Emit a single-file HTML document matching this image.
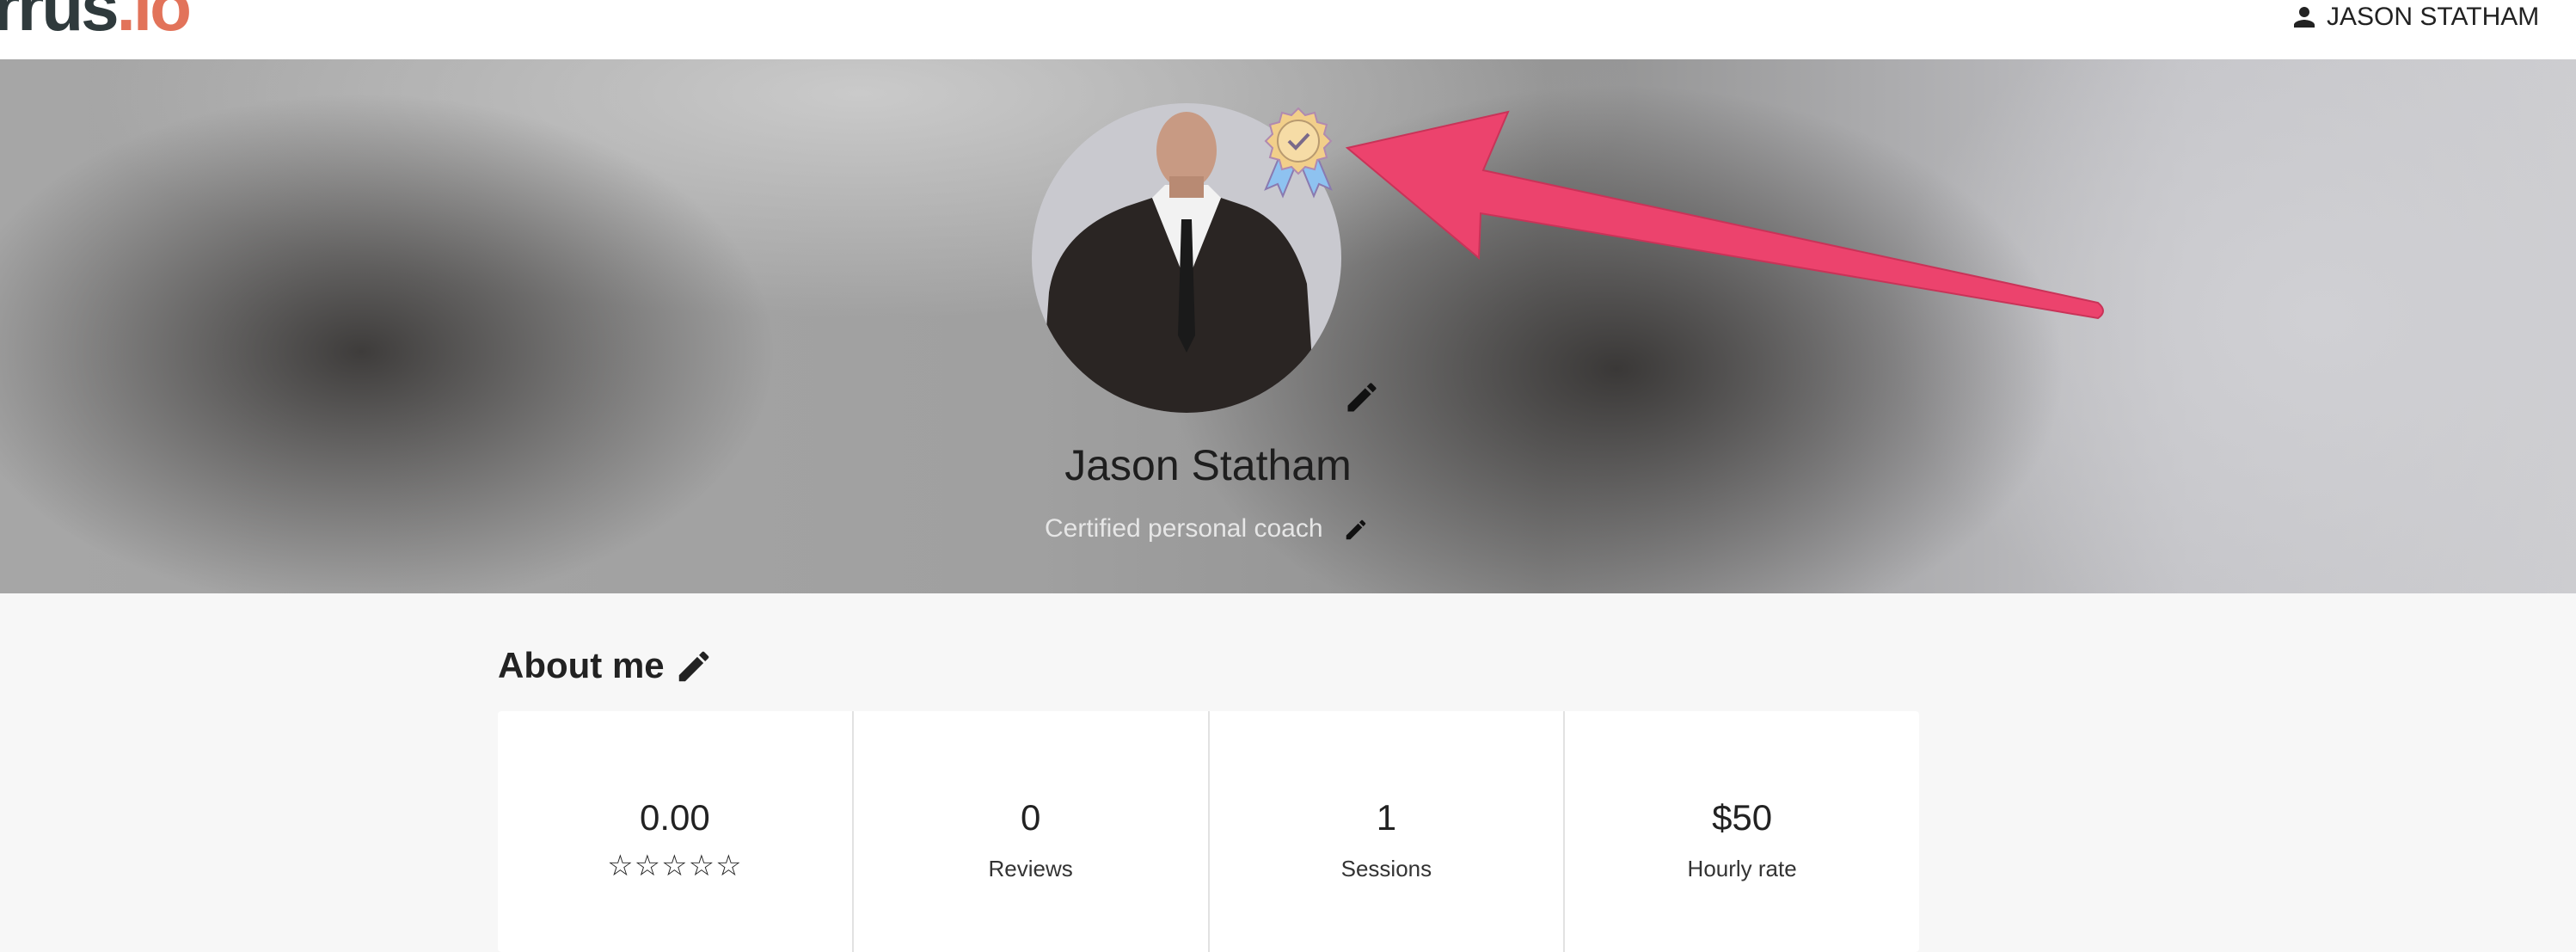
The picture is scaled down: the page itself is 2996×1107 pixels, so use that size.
<!DOCTYPE html>
<html><head><style>
*{margin:0;padding:0;box-sizing:border-box}
body{width:2996px;height:1086px;overflow:hidden;background:#f7f7f7;font-family:"Liberation Sans",sans-serif;position:relative}
.hdr{position:absolute;left:0;top:0;width:2996px;height:69px;background:#fff}
.logo{position:absolute;left:-8px;top:-38px;font-size:80px;font-weight:bold;letter-spacing:-3px;color:#2f3a3c}
.logo span{color:#e2735a}
.user{position:absolute;left:2662px;top:3px;height:34px;display:flex;align-items:center;font-size:30px;color:#222}
.banner{position:absolute;left:0;top:69px;width:2996px;height:621px;background:
radial-gradient(ellipse 480px 300px at 420px 340px,#3e3c3b,rgba(60,58,57,0) 100%),
radial-gradient(ellipse 520px 330px at 1880px 360px,#3a3837,rgba(58,56,55,0) 100%),
radial-gradient(ellipse 900px 260px at 1000px 40px,#cacaca,rgba(200,200,200,0) 100%),
radial-gradient(ellipse 500px 400px at 2700px 300px,#d0d0d4,rgba(208,208,212,0) 100%),
linear-gradient(90deg,#a6a6a6,#a0a0a0 40%,#909090 60%,#c4c4c8 85%,#cdcdd0)}
.av{position:absolute;left:1200px;top:120px;width:360px;height:360px;border-radius:50%;background:#c9c9cf;overflow:hidden}
.name{position:absolute;left:1205px;top:512px;width:400px;text-align:center;font-size:50px;color:#1e1e1e}
.sub{position:absolute;left:1215px;top:598px;font-size:30px;color:#e6e6e6}
.about{position:absolute;left:579px;top:750px;font-size:42px;font-weight:bold;color:#222}
.cards{position:absolute;left:579px;top:827px;width:1653px;height:280px;background:#fff;border-radius:4px;display:flex}
.c{flex:1;border-right:2px solid #e2e2e2;text-align:center;padding-top:100px}
.c:last-child{border-right:none}
.v{font-size:42px;color:#222}
.l{font-size:26px;color:#333;margin-top:20px}
.st{font-size:34px;color:#222;margin-top:12px;letter-spacing:1px}
</style></head><body>
<div class="hdr"><div class="logo">rrus<span>.io</span></div>
<div class="user"><svg width="36" height="36" viewBox="0 0 24 24"><path fill="#222" d="M12 12c2.2 0 4-1.8 4-4s-1.8-4-4-4-4 1.8-4 4 1.8 4 4 4zm0 2c-2.7 0-8 1.3-8 4v2h16v-2c0-2.7-5.3-4-8-4z"/></svg><span style="margin-left:8px">JASON STATHAM</span></div></div>
<div class="banner"></div>
<div class="av"><svg width="360" height="360" viewBox="0 0 360 360">
<path fill="#2a2523" d="M20 220 Q30 150 110 120 L140 110 L180 200 L220 110 L250 120 Q300 140 320 210 L330 360 L10 360Z"/>
<path fill="#f2f2f2" d="M140 110 L180 210 L220 110 L205 95 L155 95Z"/>
<path fill="#1a1a1a" d="M174 135 L186 135 L190 270 L180 290 L170 270Z"/>
<ellipse cx="180" cy="55" rx="35" ry="45" fill="#c89a83"/>
<rect x="160" y="85" width="40" height="25" fill="#b88a73"/>
</svg></div>
<svg style="position:absolute;left:1460px;top:122px" width="100" height="110" viewBox="0 0 100 110">
<path d="M28 60 L12 98 L26 92 L32 106 L46 72Z M72 60 L88 98 L74 92 L68 106 L54 72Z" fill="#8ec2f0" stroke="#8a7ab0" stroke-width="2"/>
<polygon points="50,4 58,12 69,9 72,20 83,23 80,34 88,42 80,50 83,61 72,64 69,75 58,72 50,80 42,72 31,75 28,64 17,61 20,50 12,42 20,34 17,23 28,20 31,9 42,12" fill="#f2cf8a" stroke="#b08ab0" stroke-width="2"/>
<circle cx="50" cy="42" r="24" fill="#f6dca6" stroke="#b89a70" stroke-width="2"/>
<path d="M39 42 L47 50 L62 34" fill="none" stroke="#7a6a8a" stroke-width="4"/>
</svg>
<svg style="position:absolute;left:0;top:0" width="2996" height="700">
<path d="M1567 172 L1754 130 L1725 198 L2440 352 Q2452 362 2440 370 L1722 248 L1720 300 Z" fill="#ec436d" stroke="#c93358" stroke-width="2"/>
</svg>
<svg style="position:absolute;left:1562px;top:440px" width="44" height="44" viewBox="0 0 24 24"><path fill="#111" d="M3 17.25V21h3.75L17.81 9.94l-3.75-3.75L3 17.25zM20.71 7.04a1 1 0 000-1.41l-2.34-2.34a1 1 0 00-1.41 0l-1.83 1.83 3.75 3.75 1.83-1.83z"/></svg>
<div class="name">Jason Statham</div>
<div class="sub">Certified personal coach</div>
<svg style="position:absolute;left:1562px;top:601px" width="30" height="30" viewBox="0 0 24 24"><path fill="#111" d="M3 17.25V21h3.75L17.81 9.94l-3.75-3.75L3 17.25zM20.71 7.04a1 1 0 000-1.41l-2.34-2.34a1 1 0 00-1.41 0l-1.83 1.83 3.75 3.75 1.83-1.83z"/></svg>
<div class="about">About me</div>
<svg style="position:absolute;left:784px;top:752px" width="46" height="46" viewBox="0 0 24 24"><path fill="#222" d="M3 17.25V21h3.75L17.81 9.94l-3.75-3.75L3 17.25zM20.71 7.04a1 1 0 000-1.41l-2.34-2.34a1 1 0 00-1.41 0l-1.83 1.83 3.75 3.75 1.83-1.83z"/></svg>
<div class="cards">
<div class="c"><div class="v">0.00</div><div class="st">☆☆☆☆☆</div></div>
<div class="c"><div class="v">0</div><div class="l">Reviews</div></div>
<div class="c"><div class="v">1</div><div class="l">Sessions</div></div>
<div class="c"><div class="v">$50</div><div class="l">Hourly rate</div></div>
</div>
</body></html>
